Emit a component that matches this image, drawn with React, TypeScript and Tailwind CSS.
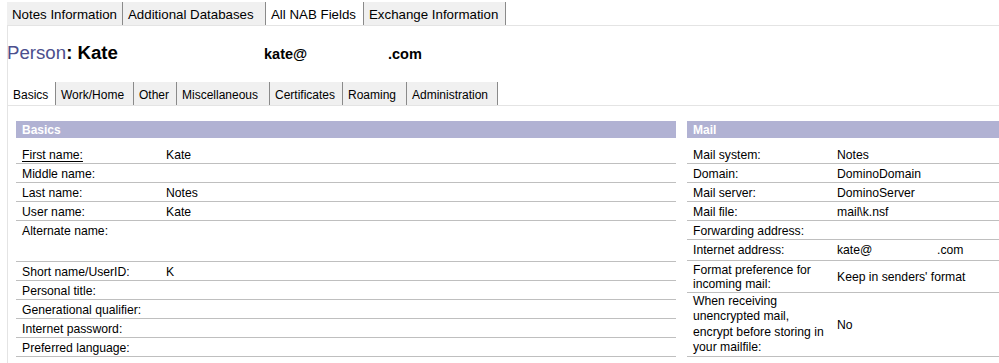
import React from "react";

type Tab = { label: string; w: string; active?: boolean };

const topTabs: Tab[] = [
  { label: "Notes Information", w: "w-[116px]" },
  { label: "Additional Databases", w: "w-[143px]" },
  { label: "All NAB Fields", w: "w-[98px]", active: true },
  { label: "Exchange Information", w: "w-[142px]" },
];

const subTabs: Tab[] = [
  { label: "Basics", w: "w-[48px]", active: true },
  { label: "Work/Home", w: "w-[78px]" },
  { label: "Other", w: "w-[43px]" },
  { label: "Miscellaneous", w: "w-[93px]" },
  { label: "Certificates", w: "w-[73px]" },
  { label: "Roaming", w: "w-[64px]" },
  { label: "Administration", w: "w-[91px]" },
];

type Row = { label: string; value?: string; h: string; top?: boolean; underline?: boolean };

const leftRows: Row[] = [
  { label: "First name:", value: "Kate", h: "h-[19px]", underline: true },
  { label: "Middle name:", h: "h-[19px]" },
  { label: "Last name:", value: "Notes", h: "h-[19px]" },
  { label: "User name:", value: "Kate", h: "h-[19px]" },
  { label: "Alternate name:", h: "h-[41px]", top: true },
  { label: "Short name/UserID:", value: "K", h: "h-[19px]" },
  { label: "Personal title:", h: "h-[19px]" },
  { label: "Generational qualifier:", h: "h-[19px]" },
  { label: "Internet password:", h: "h-[19px]" },
  { label: "Preferred language:", h: "h-[19px]" },
];

function TabStrip({ tabs, size, h }: { tabs: Tab[]; size: string; h: string }) {
  return (
    <div className="flex">
      {tabs.map((t) => (
        <div
          key={t.label}
          className={`${t.w} ${h} ${size} flex items-center pt-[3px] pl-[5px] border-r border-[#8a8a8a] whitespace-nowrap ${
            t.active ? "bg-white" : "bg-[#f0f0f0]"
          } text-black`}
        >
          {t.label}
        </div>
      ))}
    </div>
  );
}

function RowView({ r }: { r: Row }) {
  return (
    <div
      className={`${r.h} flex ${r.top ? "items-start pt-[2px]" : "items-center pt-[1px]"} border-b border-[#bfbfbf] text-[12.2px] leading-[16px] text-black`}
    >
      <div className={`w-[150px] pl-[6px] ${r.underline ? "underline underline-offset-[2px]" : ""}`}>{r.label}</div>
      <div>{r.value ?? ""}</div>
    </div>
  );
}

export default function App() {
  return (
    <div className="w-[999px] h-[363px] overflow-hidden bg-white font-['Liberation_Sans',Arial,sans-serif] text-black">
      {/* top tabs */}
      <div className="pt-[2px] pl-[7px]">
        <TabStrip tabs={topTabs} size="text-[13.3px]" h="h-[23px]" />
      </div>
      <div className="ml-[7px] border-l border-t border-[#e4e4e4] h-[338px]">
        {/* Person header */}
        <div className="h-[56px] pt-[16px] flex items-baseline">
          <div className="w-[257px] -ml-[1px] text-[18.67px] leading-[22px] whitespace-nowrap">
            <span className="text-[#4c4f8e]">Person</span>
            <span className="font-bold">: Kate</span>
          </div>
          <span className="w-[124px] text-[14.5px] font-bold leading-[22px]">kate@</span>
          <span className="text-[14.5px] font-bold leading-[22px]">.com</span>
        </div>
        {/* sub tabs */}
        <div className="border-b border-[#e4e4e4]">
          <TabStrip tabs={subTabs} size="text-[12px]" h="h-[23px]" />
        </div>
        {/* sections */}
        <div className="pt-[15px] pl-[8px] flex gap-[11px]">
          <div className="w-[660px] shrink-0">
            <div className="h-[17px] bg-[#b1b2d3] pl-[6px] flex items-center text-[12px] font-bold text-white">Basics</div>
            <div className="mt-[7px]">
              {leftRows.map((r) => (
                <RowView key={r.label} r={r} />
              ))}
            </div>
          </div>
          <div className="w-[330px] shrink-0">
            <div className="h-[17px] bg-[#b1b2d3] pl-[6px] flex items-center text-[12px] font-bold text-white">Mail</div>
            <div className="mt-[7px]">
              <RowView r={{ label: "Mail system:", value: "Notes", h: "h-[19px]" }} />
              <RowView r={{ label: "Domain:", value: "DominoDomain", h: "h-[19px]" }} />
              <RowView r={{ label: "Mail server:", value: "DominoServer", h: "h-[19px]" }} />
              <RowView r={{ label: "Mail file:", value: "mail\\k.nsf", h: "h-[19px]" }} />
              <RowView r={{ label: "Forwarding address:", h: "h-[19px]" }} />
              <div className="h-[21px] flex items-center border-b border-[#bfbfbf] text-[12.2px] leading-[16px]">
                <div className="w-[150px] pl-[6px]">Internet address:</div>
                <div className="flex">
                  <span className="w-[100px]">kate@</span>
                  <span>.com</span>
                </div>
              </div>
              <div className="h-[32px] flex items-center border-b border-[#bfbfbf] text-[12.2px]">
                <div className="w-[150px] pl-[6px] pr-[10px] leading-[14px]">Format preference for incoming mail:</div>
                <div className="leading-[16px]">Keep in senders' format</div>
              </div>
              <div className="h-[64px] flex items-center border-b border-[#bfbfbf] text-[12.2px]">
                <div className="w-[150px] pl-[6px] pr-[10px] leading-[15.3px]">
                  When receiving unencrypted mail, encrypt before storing in your mailfile:
                </div>
                <div className="leading-[16px]">No</div>
              </div>
            </div>
          </div>
        </div>
      </div>
    </div>
  );
}
